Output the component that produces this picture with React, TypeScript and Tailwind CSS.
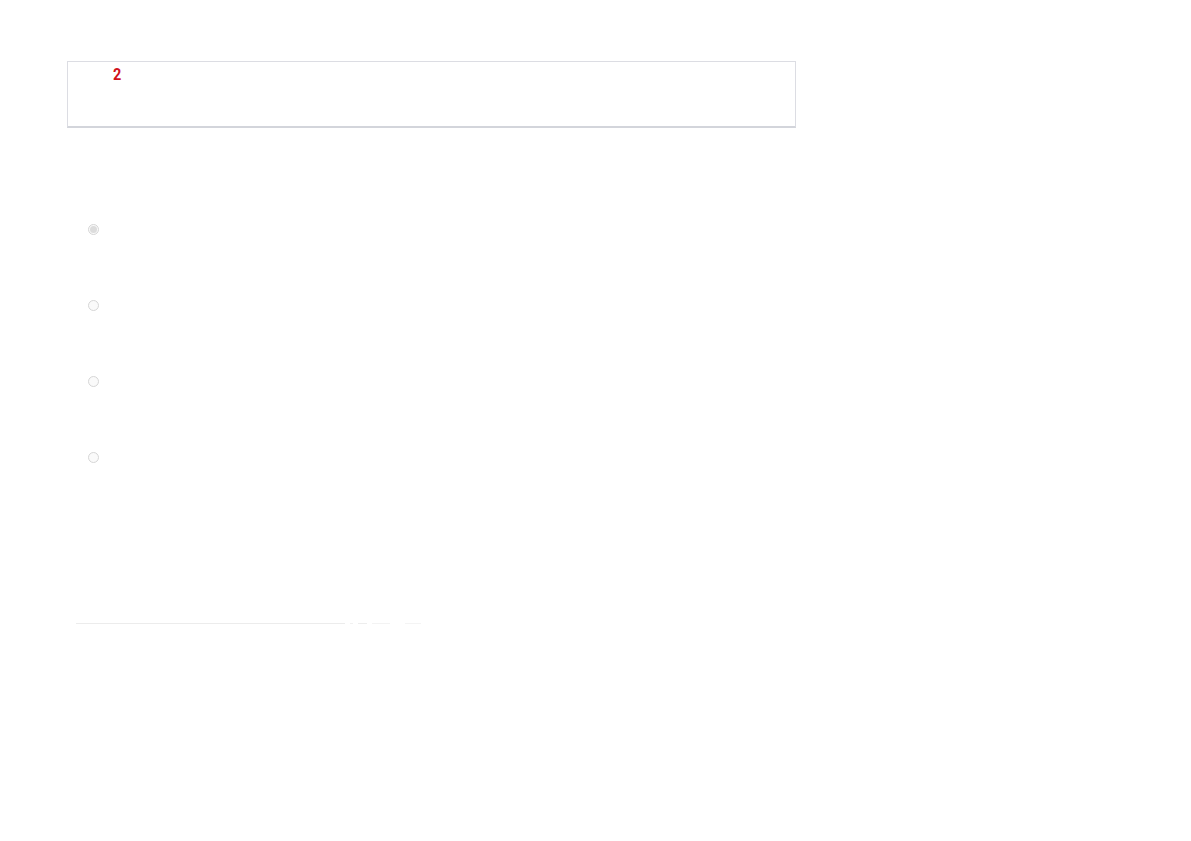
export default function App() {
  const options = [true, false, false, false]

  return (
    <div className="min-h-[841px] w-[1191px] bg-white font-['Roboto',sans-serif]">
      <div className="pl-[67px] pt-[61px]">
        {/* Question card */}
        <div className="h-[67px] w-[729px] border border-b-2 border-[#dcdde3] border-b-[#d3d5db] bg-white pl-[45px] pt-[1px]">
          <span className="inline-block origin-left scale-x-[0.85] text-[17px] font-bold leading-[20px] text-[#d0111b]">2</span>
        </div>

        {/* Options */}
        <div className="mt-[96px] flex flex-col gap-[65px] pl-[21px]">
          {options.map((checked, i) => (
            <div key={i} className="flex h-[11px] items-center">
              <span className="flex h-[11px] w-[11px] items-center justify-center rounded-full border border-[#d6d6d6] bg-[#fafafa]">
                {checked && <span className="h-[7px] w-[7px] rounded-full bg-[#dcdcdc]" />}
              </span>
            </div>
          ))}
        </div>

        {/* Footer rule */}
        <div className="mt-[160px] flex items-center pl-[9px]">
          <div className="h-px w-[269px] bg-[#ececec]" />
          <div className="ml-[5px] flex items-center gap-[5px]">
            <div className="h-px w-[3px] bg-[#f1f1f1]" />
            <div className="h-px w-[9px] bg-[#ededed]" />
            <div className="h-px w-[18px] bg-[#f3f3f3]" />
            <div className="ml-[10px] h-px w-[16px] bg-[#f4f4f4]" />
          </div>
        </div>
      </div>
    </div>
  )
}
